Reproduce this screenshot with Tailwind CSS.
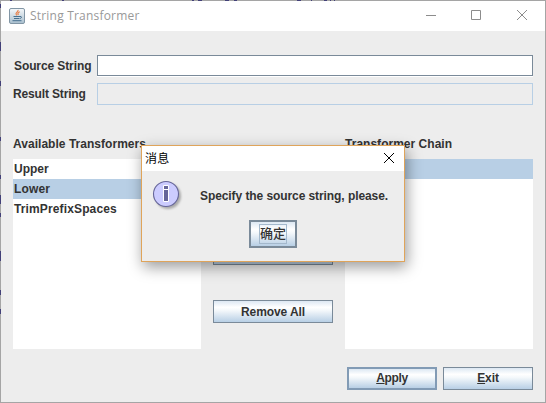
<!DOCTYPE html>
<html lang="zh">
<head>
<meta charset="utf-8">
<title>String Transformer</title>
<script src="https://cdn.jsdelivr.net/npm/@tailwindcss/browser@4"></script>
</head>
<body class="overflow-hidden">
<div class="relative flex h-[403px] w-[546px] flex-col overflow-hidden border border-[#a5a5a5] bg-[#ededed] font-['Liberation_Sans','Noto_Sans_CJK_SC',sans-serif] text-[12px] leading-[20px] font-bold text-[#333]">
  <header class="flex h-[30px] shrink-0 items-center bg-white pl-2">
    <svg class="h-4 w-4 shrink-0" viewBox="0 0 16 16">
      <defs><linearGradient id="tile" x2="0" y2="1"><stop stop-color="#f5f8fa"/><stop offset="1" stop-color="#a9bfce"/></linearGradient></defs>
      <rect x=".5" y=".5" width="15" height="15" rx="1.5" fill="url(#tile)" stroke="#8296a5"/>
      <path d="M9 2c.8 1.800-3 2.600-1.800 4.300l.8 1M10.800 3.800c-2 .8-2.500 1.700-1.300 3.200" fill="none" stroke="#e8804a" stroke-width="1.200"/>
      <path d="M4.500 8.500h6.500M5 10.500h5.500M3.500 12.700h9M11 8.500c2-.4 2 1.500 0 2" fill="none" stroke="#47708f"/>
    </svg>
    <h1 class="ml-[5px] font-['Open_Sans',sans-serif] text-[12px] font-normal tracking-[0.2px] text-[#999]">String Transformer</h1>
    <svg class="ml-auto h-[30px] w-[138px] shrink-0" viewBox="0 0 138 30" fill="none" stroke="#8c8c8c"><path d="M19 14.500h10M64.500 9.500h9v9h-9zM110 9l10 10M120 9l-10 10"/></svg>
  </header>
  <main class="flex flex-1 flex-col pt-6 pl-3 pr-3">
    <div class="flex h-[22px] items-center">
      <label class="w-[84px] pl-px tracking-[-0.1px] whitespace-nowrap">Source String</label>
      <div class="h-[21px] w-[436px] self-start border border-[#7a8a99] bg-white shadow-[0_1px_0_#fff]"></div>
    </div>
    <div class="mt-[6px] flex h-[22px] items-center">
      <label class="w-[84px] tracking-[-0.15px] whitespace-nowrap">Result String</label>
      <div class="h-[22px] w-[436px] border border-[#b8cfe5]"></div>
    </div>
    <div class="mt-[29px] flex">
      <section class="w-[188px]">
        <h2 class="h-[25px] tracking-[0.03px]">Available Transformers</h2>
        <ul class="h-[190px] bg-white">
          <li class="h-5 pl-px">Upper</li>
          <li class="h-5 bg-[#b8cfe5] pl-px tracking-[0.13px]">Lower</li>
          <li class="h-5 pl-px tracking-[0.13px]">TrimPrefixSpaces</li>
        </ul>
      </section>
      <div class="flex w-[144px] flex-col px-3 pt-[108px]">
        <button class="h-[23px] border border-[#7a8a99] bg-linear-to-b from-[#dde8f3] via-white to-[#b8cfe5] leading-[20px]">Remove</button>
        <button class="mt-[35px] h-[23px] border border-[#7a8a99] bg-[linear-gradient(#dde8f3,#fff_30%,#f4f8fb_45%,#b8cfe5)] leading-[20px] tracking-[-0.1px]">Remove All</button>
      </div>
      <section class="w-[188px]">
        <h2 class="h-[25px] tracking-[0.02px]">Transformer Chain</h2>
        <div class="h-[190px] bg-white"><div class="h-5 bg-[#b8cfe5]"></div></div>
      </section>
    </div>
    <div class="mt-[18px] flex justify-end gap-[6px]">
      <button class="h-[23px] w-[90px] border-2 border-[#829bb5] bg-[linear-gradient(#dde8f3,#fff_30%,#f4f8fb_45%,#b8cfe5)] leading-[19px] tracking-[-0.35px]"><u>A</u>pply</button>
      <button class="h-[23px] w-[90px] border border-[#7a8a99] bg-[linear-gradient(#dde8f3,#fff_30%,#f4f8fb_45%,#b8cfe5)] leading-[21px] tracking-[-0.1px]"><u>E</u>xit</button>
    </div>
  </main>
  <div class="absolute top-[144px] left-[140px] flex h-[117px] w-[264px] flex-col border border-[#dfa45a] bg-[#ededed] shadow-[2px_5px_14px_rgba(0,0,0,0.4)]">
    <div class="flex h-[25px] items-center justify-between bg-white pr-[9px] pl-[3px] text-black">
      <span class="-mt-[2px] font-['Noto_Sans_CJK_SC',sans-serif] font-normal tracking-[0.3px]">消息</span>
      <svg class="-mt-px h-3 w-3" viewBox="0 0 12 12" fill="none" stroke="#000"><path d="M1 1l10 10M11 1L1 11"/></svg>
    </div>
    <div class="flex h-[49px] pt-[8px] pl-[10px]">
      <svg class="h-8 w-8 shrink-0" viewBox="0 0 32 32">
        <defs><filter id="soft" x="-20%" y="-20%" width="150%" height="150%"><feGaussianBlur stdDeviation="1.200"/></filter></defs>
        <circle cx="16" cy="17" r="13" fill="#aaa" filter="url(#soft)"/>
        <circle cx="14" cy="15" r="12.500" fill="#ccccff" stroke="#666699" stroke-width="1.100"/>
        <path d="M11.500 6.500h5v4h-5zM11.500 10.500h5v12h-5z" fill="#666699" stroke="#fff"/>
      </svg>
      <p class="ml-[16px] pt-[7px] tracking-[-0.08px] whitespace-nowrap">Specify the source string, please.</p>
    </div>
    <button class="ml-[107px] flex h-[28px] w-[48px] shrink-0 items-center justify-center border-2 border-[#7a8a99] bg-[linear-gradient(#dde8f3,#fff_30%,#f4f8fb_45%,#b8cfe5)]">
      <span class="h-[20px] w-[28px] border border-[#a3b8cc] text-[13px] leading-[18px] font-medium">确定</span>
    </button>
  </div>
</div>
<!-- Slivers of the editor window behind this frame -->
<svg class="pointer-events-none absolute top-0 left-0" width="546" height="403" viewBox="0 0 546 403" fill="none" stroke="#424078">
  <path d="M10 .5h2M62 .5h2M192 .5h2M198 .5h4M225 .5h4M234 .5h3M297 .5h4M311 .5h1M324 .5h3M330 .5h1M334 .5h1"/>
  <path d="M.5 4v4M.5 42v9M.5 81v5M.5 137v4M.5 175v4M.5 195v9M.5 213v4M.5 251v10M.5 290v5M.5 309v5"/>
</svg>
</body>
</html>
